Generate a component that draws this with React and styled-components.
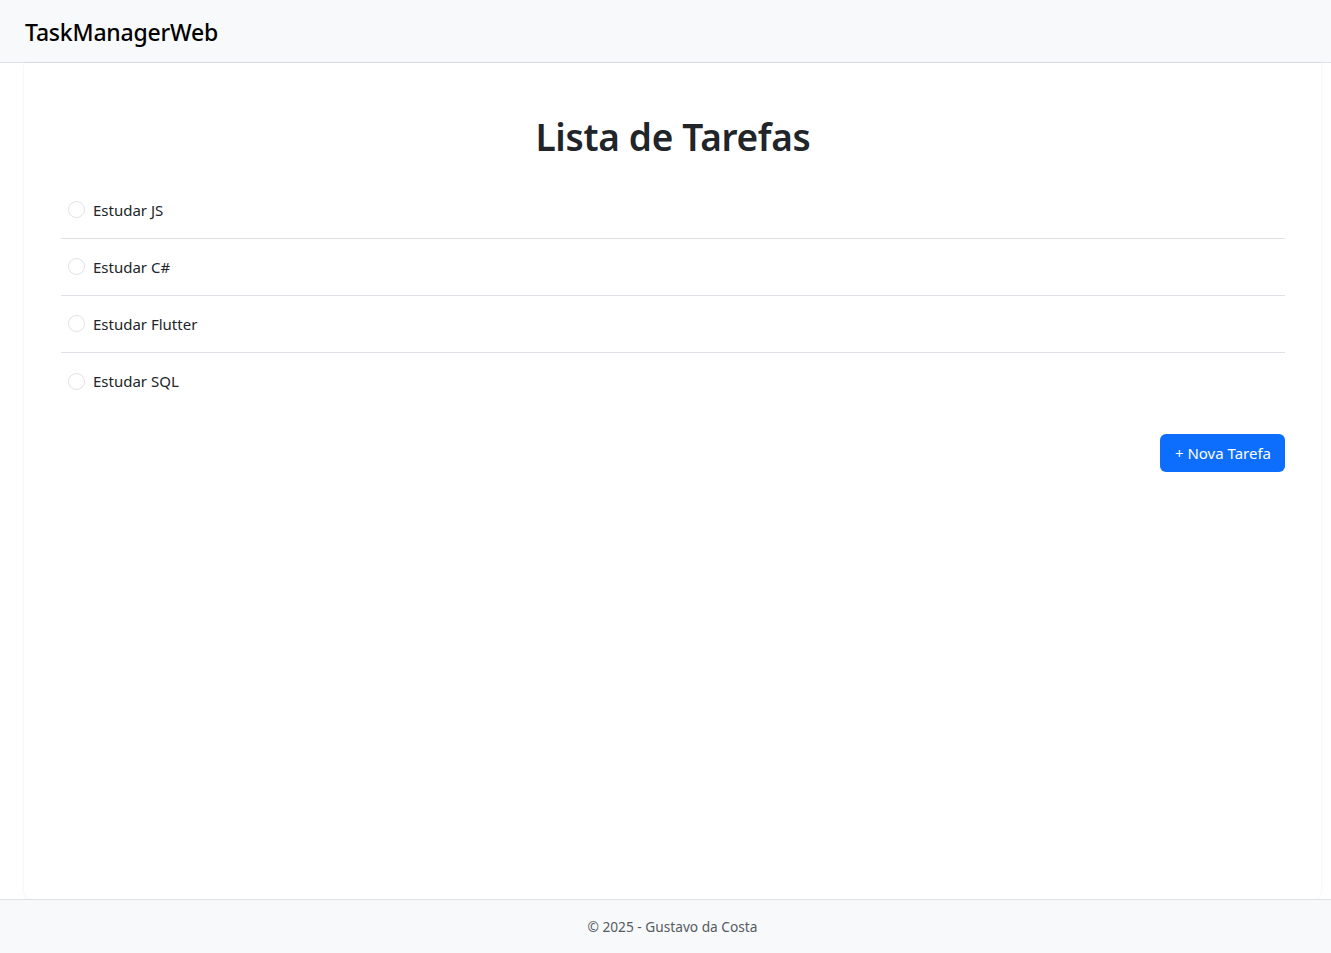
import React from "react";
import styled, { createGlobalStyle } from "styled-components";

const GlobalStyle = createGlobalStyle`
  html, body {
    margin: 0;
    padding: 0;
    height: 100%;
  }
  body {
    font-family: "Noto Sans", "Open Sans", sans-serif;
    color: #212529;
    background: #ffffff;
  }
  #root {
    height: 100%;
  }
`;

const Page = styled.div`
  display: flex;
  flex-direction: column;
  height: 953px;
`;

const Navbar = styled.header`
  height: 63px;
  flex-shrink: 0;
  display: flex;
  align-items: center;
  padding: 0 25px;
  background: #f8f9fa;
  border-bottom: 1px solid #dee2e6;
  box-sizing: border-box;
`;

const Brand = styled.span`
  font-size: 23px;
  font-weight: 500;
  color: #000;
  letter-spacing: -0.2px;
  padding-top: 2px;
`;

const Main = styled.main`
  flex: 1;
  display: flex;
  padding: 0 10px 0 24px;
`;

const Card = styled.section`
  flex: 1;
  background: #fff;
  border-radius: 0 0 8px 8px;
  box-shadow: 0 0 3px rgba(0, 0, 0, 0.08);
  padding: 50px 36px 0 37px;
`;

const Title = styled.h1`
  margin: 0 0 21px;
  text-align: center;
  font-size: 37px;
  font-weight: 600;
  line-height: 48px;
  color: #212529;
  letter-spacing: -0.3px;
`;

const TaskList = styled.ul`
  list-style: none;
  margin: 0;
  padding: 0;
`;

const TaskRow = styled.li`
  display: flex;
  align-items: center;
  gap: 8px;
  height: 57px;
  padding: 0 7px 1px;
  box-sizing: border-box;
  border-bottom: ${(p) => (p.$last ? "none" : "1px solid #dee2e6")};
`;

const Radio = styled.span`
  width: 15px;
  height: 15px;
  border-radius: 50%;
  border: 1px solid #dee2e6;
  background: #fff;
  flex-shrink: 0;
`;

const TaskText = styled.span`
  font-size: 15px;
  color: #212529;
`;

const Actions = styled.div`
  display: flex;
  justify-content: flex-end;
  margin-top: 24px;
`;

const Button = styled.button`
  background: #0d6efd;
  color: #fff;
  border: none;
  border-radius: 6px;
  height: 38px;
  padding: 0 14px 0 15px;
  font-family: inherit;
  font-size: 15px;
  cursor: pointer;
`;

const Footer = styled.footer`
  height: 54px;
  flex-shrink: 0;
  display: flex;
  align-items: center;
  justify-content: center;
  padding-left: 14px;
  background: #f8f9fa;
  border-top: 1px solid #dee2e6;
  box-sizing: border-box;
  font-size: 13.7px;
  color: #555b61;
`;

const tasks = ["Estudar JS", "Estudar C#", "Estudar Flutter", "Estudar SQL"];

export default function App() {
  return (
    <>
      <GlobalStyle />
      <Page>
        <Navbar>
          <Brand>TaskManagerWeb</Brand>
        </Navbar>
        <Main>
          <Card>
            <Title>Lista de Tarefas</Title>
            <TaskList>
              {tasks.map((t, i) => (
                <TaskRow key={t} $last={i === tasks.length - 1}>
                  <Radio />
                  <TaskText>{t}</TaskText>
                </TaskRow>
              ))}
            </TaskList>
            <Actions>
              <Button>+ Nova Tarefa</Button>
            </Actions>
          </Card>
        </Main>
        <Footer>© 2025 - Gustavo da Costa</Footer>
      </Page>
    </>
  );
}
